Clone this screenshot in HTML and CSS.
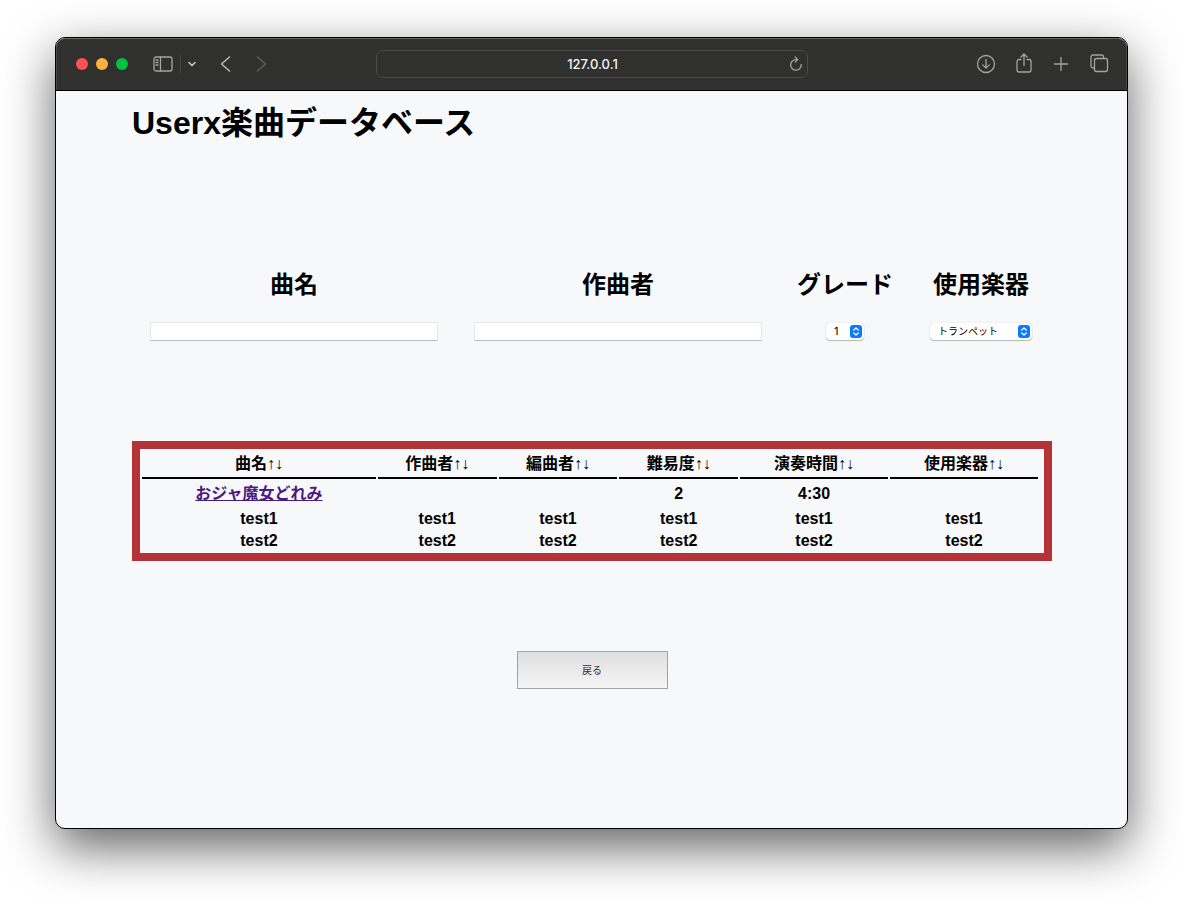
FILE: index.html
```html
<!DOCTYPE html>
<html lang="ja">
<head>
<meta charset="utf-8">
<title>Userx楽曲データベース</title>
<link rel="stylesheet" href="styles.css">
</head>
<body>
<div class="window">
  <header class="toolbar">
    <div class="tools-left">
      <div class="lights"><span class="light red"></span><span class="light amber"></span><span class="light green"></span></div>
      <button class="tool sidebar" type="button" aria-label="Sidebar">
        <svg width="20" height="16" viewBox="0 0 20 16"><rect x="1" y="1" width="18" height="14" rx="2"/><path d="M7.500 1v14M3 4h2M3 6.500h2M3 9h2"/></svg>
      </button>
      <span class="divider"></span>
      <button class="tool caret" type="button" aria-label="Tab groups">
        <svg width="8" height="6" viewBox="0 0 8 6"><path class="bold" d="M1 1.500l3 3 3-3"/></svg>
      </button>
      <button class="tool back" type="button" aria-label="Back">
        <svg width="11" height="16" viewBox="0 0 11 16"><path class="mid" d="M9.500 1L1.500 8l8 7"/></svg>
      </button>
      <button class="tool forward" type="button" aria-label="Forward">
        <svg width="11" height="16" viewBox="0 0 11 16"><path class="mid" d="M1.500 1l8 7-8 7"/></svg>
      </button>
    </div>
    <div class="address">
      <input class="address-text" type="text" aria-label="Address" value="127.0.0.1">
      <button class="tool reload" type="button" aria-label="Reload">
        <svg width="14" height="16" viewBox="0 0 14 16"><path d="M12.200 8.500a5.300 5.300 0 1 1-5.300-4.900h1.400M6.200 1l2.500 2.600-2.500 2.500"/></svg>
      </button>
    </div>
    <div class="tools-right">
      <button class="tool" type="button" aria-label="Downloads">
        <svg width="20" height="22" viewBox="0 0 20 22"><circle cx="10" cy="11" r="8.500"/><path d="M10 6.500v8.500M6.700 11.900l3.300 3.200 3.300-3.200"/></svg>
      </button>
      <button class="tool" type="button" aria-label="Share">
        <svg width="18" height="22" viewBox="0 0 18 22"><path d="M6 6.500H4a2 2 0 0 0-2 2V17a2 2 0 0 0 2 2h10a2 2 0 0 0 2-2V8.500a2 2 0 0 0-2-2h-2M9 12.500V1.200M6 4l3-3 3 3"/></svg>
      </button>
      <button class="tool" type="button" aria-label="New tab">
        <svg width="18" height="22" viewBox="0 0 18 22"><path d="M9 4.500v13M2.500 11h13"/></svg>
      </button>
      <button class="tool" type="button" aria-label="Tab overview">
        <svg width="20" height="22" viewBox="0 0 20 22"><path d="M5.500 15H4a2 2 0 0 1-2-2V4a2 2 0 0 1 2-2h8.500a2 2 0 0 1 2 2V5.500"/><rect x="5.500" y="5.500" width="13" height="13" rx="2"/></svg>
      </button>
    </div>
  </header>
  <main class="page">
    <h1 class="title">Userx楽曲データベース</h1>
    <form class="search">
      <div class="field"><label for="song">曲名</label><div class="control wide"><input class="textbox" id="song" type="text"></div></div>
      <div class="field"><label for="composer">作曲者</label><div class="control wide"><input class="textbox" id="composer" type="text"></div></div>
      <div class="field"><label for="grade">グレード</label>
        <div class="control"><span class="picker grade"><select id="grade"><option>1</option></select>
          <svg class="stepper" width="12" height="13" viewBox="0 0 12 13"><rect width="12" height="13" rx="3"/><path d="M3.700 5L6 2.900 8.300 5M3.700 8L6 10.100 8.300 8"/></svg></span></div></div>
      <div class="field"><label for="instrument">使用楽器</label>
        <div class="control"><span class="picker instrument"><select id="instrument"><option>トランペット</option></select>
          <svg class="stepper" width="12" height="13" viewBox="0 0 12 13"><rect width="12" height="13" rx="3"/><path d="M3.700 5L6 2.900 8.300 5M3.700 8L6 10.100 8.300 8"/></svg></span></div></div>
    </form>
    <div class="results">
      <table class="songs">
        <colgroup><col class="c-song"><col class="c-person"><col class="c-person"><col class="c-person"><col class="c-time"><col class="c-time"></colgroup>
        <thead><tr>
          <th>曲名<span class="sort">↑↓</span></th><th>作曲者<span class="sort">↑↓</span></th><th>編曲者<span class="sort">↑↓</span></th><th>難易度<span class="sort">↑↓</span></th><th>演奏時間<span class="sort">↑↓</span></th><th>使用楽器<span class="sort">↑↓</span></th>
        </tr></thead>
        <tbody>
          <tr class="first"><td><a href="#song">おジャ魔女どれみ</a></td><td></td><td></td><td>2</td><td>4:30</td><td></td></tr>
          <tr><td>test1</td><td>test1</td><td>test1</td><td>test1</td><td>test1</td><td>test1</td></tr>
          <tr><td>test2</td><td>test2</td><td>test2</td><td>test2</td><td>test2</td><td>test2</td></tr>
        </tbody>
      </table>
    </div>
    <button class="return" type="button">戻る</button>
  </main>
</div>
</body>
</html>
```
FILE: styles.css
```css
* { box-sizing: border-box; }

body {
  margin: 0;
  min-height: 100vh;
  padding: 37px 55px 73px;
  display: flex;
  background: #fff;
  color: #000;
  font-family: "Liberation Sans", "Noto Sans CJK JP", sans-serif;
}

button, input, select { font: inherit; margin: 0; }

.window {
  flex: 1;
  min-width: 0;
  border: 1px solid #000;
  border-radius: 10px;
  overflow: hidden;
  background: #f7f8fa;
  box-shadow: 0 18px 50px rgba(0, 0, 0, 0.62);
}

.toolbar {
  display: grid;
  grid-template-columns: 1fr minmax(0, 432px) 1fr;
  align-items: center;
  height: 53px;
  background: #30302e;
  border-bottom: 1px solid #000;
  box-shadow: inset 0 1px #6a6a69, inset 1px 0 #4a4a49, inset -1px 0 #4a4a49;
  border-radius: 9px 9px 0 0;
}

.tools-left, .tools-right, .lights { display: flex; align-items: center; }
.tools-left { padding-left: 20px; }
.tools-right { justify-content: flex-end; gap: 19px; padding-right: 18px; }
.lights { gap: 8px; }
.light { width: 12px; height: 12px; border-radius: 50%; }
.red { background: #ff5252; }
.amber { background: #ffb03b; }
.green { background: #00c441; }

.tool {
  display: flex;
  padding: 0;
  border: 0;
  background: none;
  color: #a3a3a2;
}
.tool svg {
  fill: none;
  stroke: currentColor;
  stroke-width: 1.3;
  stroke-linecap: round;
  stroke-linejoin: round;
}
.tool .bold { stroke-width: 1.6; }
.tool .mid { stroke-width: 1.6; }
.sidebar { margin-left: 25px; }
.divider { width: 1px; height: 18px; margin: 0 7px; background: #444443; }
.caret { color: #c4c4c3; }
.back { margin-left: 24px; color: #b5b5b4; }
.forward { margin-left: 25px; color: #5b5b5a; }

.address {
  display: flex;
  align-items: center;
  height: 28px;
  padding: 0 4px 0 20px;
  border: 1px solid #4c4c4b;
  border-radius: 7px;
}
.address-text {
  flex: 1;
  min-width: 0;
  padding: 0;
  border: 0;
  background: none;
  color: #f4f4f4;
  text-align: center;
  font: 500 13px/20px Inter, sans-serif;
}

.page {
  padding: 8px 75px 60px 76px;
}
.title {
  margin: 0 0 119px;
  font-size: 32px;
  line-height: 48px;
}

.search {
  display: grid;
  grid-template-columns: 324fr 324fr 130fr 142fr;
}
.field label {
  display: block;
  text-align: center;
  white-space: nowrap;
  font-size: 24px;
  font-weight: bold;
  line-height: 38px;
}
.control {
  display: flex;
  justify-content: center;
  align-items: center;
  height: 20px;
  margin-top: 17px;
}
.wide { padding: 0 18px; }
.textbox {
  width: 100%;
  height: 19px;
  border: 1px solid #e6e7e9;
  border-bottom-color: #b9babb;
  background: #fff;
  font-size: 11px;
}
.picker { position: relative; display: flex; }
.grade { width: 38px; }
.instrument { width: 102px; }
.picker select {
  width: 100%;
  height: 17px;
  padding: 0 0 0 8px;
  appearance: none;
  border: 0;
  border-radius: 4px;
  background: #fff;
  box-shadow: 0 1px 1px rgba(0, 0, 0, 0.25), 0 0 1px rgba(0, 0, 0, 0.25);
  color: #000;
  font: 11px/17px Inter, "Noto Sans CJK JP", sans-serif;
}
.instrument select { font-size: 10px; }
.stepper { position: absolute; right: 2px; top: 2px; pointer-events: none; }
.stepper rect { fill: #0a7bff; }
.stepper path { fill: none; stroke: #fff; stroke-width: 1.3; stroke-linecap: round; stroke-linejoin: round; }

.results {
  margin-top: 100px;
  padding-right: 4px;
  border: 8px solid #b33339;
}
.songs {
  width: 100%;
  table-layout: fixed;
  border-collapse: separate;
  border-spacing: 2px;
  text-align: center;
  font-size: 16px;
  font-weight: bold;
  line-height: 20px;
}
.songs th, .songs td { padding: 0; }
.songs th { height: 28px; border-bottom: 2px solid #000; }
.songs .first td { height: 26px; }
.songs a { color: #4b1a82; }
.sort { font-family: "Liberation Serif", serif; font-weight: normal; }
.c-song { width: 26.4%; }
.c-person { width: 13.4%; }
.c-time { width: 16.7%; }

.return {
  display: block;
  width: 151px;
  height: 38px;
  margin: 90px auto 0;
  padding: 0 0 2px;
  border: 1px solid #a2a2a2;
  background: linear-gradient(#dfdfdf, #f5f5f5);
  color: #333;
  font-size: 10px;
}
```
